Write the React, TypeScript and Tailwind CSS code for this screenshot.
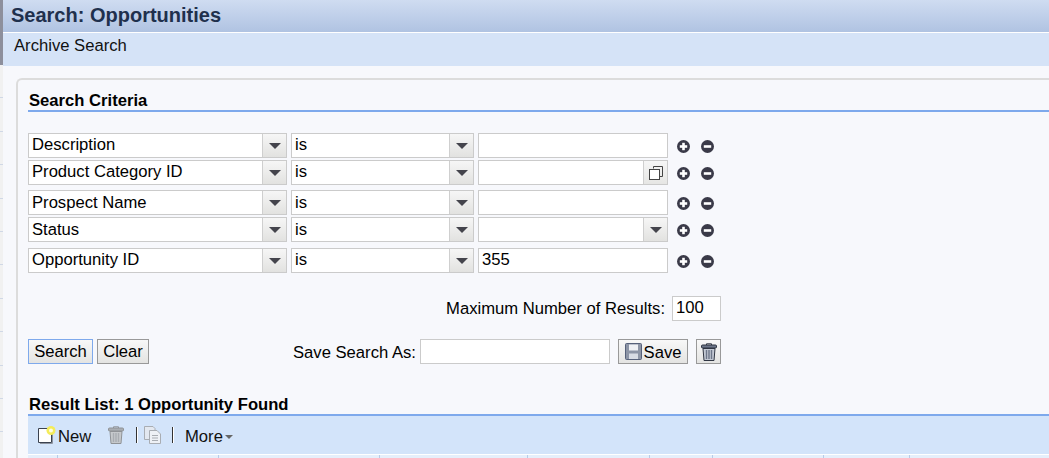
import React from 'react';

function Arrow() {
  return (
    <div className="w-6 h-full shrink-0 border-l border-[#cfcfcf] bg-gradient-to-b from-[#f6f6f6] to-[#e2e2e0] flex items-center justify-center">
      <div className="w-0 h-0 border-x-[6px] border-x-transparent border-t-[6px] border-t-[#44444c]" />
    </div>
  );
}

function Select({ value, className, low }: { value: string; className: string; low?: boolean }) {
  return (
    <div className={`h-[25px] border border-[#cbcbcb] bg-white flex items-center shrink-0 ${className}`}>
      <span className={`flex-1 pl-[3px] text-black whitespace-nowrap overflow-hidden ${low ? 'pb-0' : 'pb-[2px]'}`}>{value}</span>
      <Arrow />
    </div>
  );
}

function RoundBtn({ minus }: { minus?: boolean }) {
  return (
    <svg width="13" height="13" viewBox="0 0 13 13">
      <circle cx="6.5" cy="6.5" r="6.5" fill="#3a3a48" />
      <rect x="2.8" y="5.2" width="7.4" height="2.6" fill="#fff" />
      {!minus && <rect x="5.2" y="2.8" width="2.6" height="7.4" fill="#fff" />}
    </svg>
  );
}

function CriteriaRow({ label, last, mt, low }: { label: string; last: React.ReactNode; mt: string; low?: boolean }) {
  return (
    <div className={`flex items-center ${mt}`}>
      <Select value={label} low={low} className="w-[259px]" />
      <Select value="is" low={low} className="w-[183px] ml-[4px]" />
      <div className="ml-[4px] w-[190px] shrink-0">{last}</div>
      <div className="ml-[9px] flex gap-[11px] mt-[1px]">
        <RoundBtn />
        <RoundBtn minus />
      </div>
    </div>
  );
}

function TextBox({ value, className, children }: { value?: string; className: string; children?: React.ReactNode }) {
  return (
    <div className={`h-[25px] border border-[#cbcbcb] bg-white flex items-center ${className}`}>
      <span className="flex-1 pl-[3px] pb-[2px] text-black">{value}</span>
      {children}
    </div>
  );
}

function CopyIcon() {
  return (
    <svg width="14" height="14" viewBox="0 0 14 14" fill="none" stroke="#444">
      <path d="M4.5 2.5V0.5H13.5V10.5H10.5" />
      <rect x="0.5" y="3.5" width="10" height="10" fill="#fff" />
    </svg>
  );
}

function CopyDocsIcon() {
  return (
    <svg width="17" height="18" viewBox="0 0 17 18" fill="none" stroke="#a9adb3">
      <path d="M0.5 0.5H9L11 2.5V13.5H0.5Z" fill="#e3e8f0" />
      <path d="M5.5 4.5H13L16.5 8V17.5H5.5Z" fill="#eef1f6" />
      <path d="M8 9.5H14M8 12H14M8 14.5H14" />
    </svg>
  );
}

function SaveIcon() {
  return (
    <svg width="17" height="17" viewBox="0 0 17 17">
      <rect x="0.5" y="0.5" width="16" height="16" rx="1" fill="#8d95a6" stroke="#56617a" />
      <rect x="4" y="1.5" width="9" height="6" fill="#eef0f4" />
      <rect x="4" y="10.5" width="9" height="5.5" fill="#d8dce4" />
    </svg>
  );
}

function TrashIcon({ faded }: { faded?: boolean }) {
  const body = faded ? '#a9adb2' : '#6d7689';
  const line = faded ? '#8f9296' : '#2f3542';
  return (
    <svg width="16" height="18" viewBox="0 0 16 18">
      <path d="M5.5 2 V0.8 H10.5 V2" fill="none" stroke={line} />
      <rect x="0.5" y="2" width="15" height="3" rx="1" fill={body} stroke={line} />
      <path d="M2 5.5 H14 L13 17.5 H3 Z" fill={faded ? '#c6c9cc' : '#c3c9d4'} stroke={line} />
      <path d="M5.5 7 V16 M8 7 V16 M10.5 7 V16" stroke={body} strokeWidth="1.4" />
    </svg>
  );
}

function NewIcon() {
  return (
    <svg width="19" height="18" viewBox="0 0 19 18">
      <path d="M0.5 2.5 H13.5 V16.5 H0.5 Z" fill="#fff" stroke="#3b4250" />
      <path d="M14.5 6 V17.5 H2" fill="none" stroke="#8d94a0" />
      <circle cx="13" cy="4.5" r="4.5" fill="#f4ec5a" />
      <circle cx="13" cy="4.5" r="2" fill="#fffde0" />
    </svg>
  );
}

function Btn({ children, className }: { children: React.ReactNode; className: string }) {
  return (
    <div className={`h-[25px] shrink-0 border bg-gradient-to-b from-[#f8f8f8] to-[#e4e4e2] flex items-center justify-center text-black ${className}`}>
      {children}
    </div>
  );
}

function Pipe({ className }: { className: string }) {
  return <div className={`w-[2px] h-[16px] border-l border-l-[#333] border-r border-r-white ${className}`} />;
}

export default function App() {
  return (
    <div className="w-[1049px] h-[458px] overflow-hidden flex bg-white text-[16.64px] leading-[19px] font-['Liberation_Sans',Arial,sans-serif]">
      <div className="w-[3px] shrink-0 bg-[#f1f1f1] flex flex-col">
        <div className="h-[65px] shrink-0 bg-[#8d8f9c]" />
        {Array.from({ length: 12 }).map((_, i) => (
          <div key={i} className="h-[33.4px] shrink-0 border-b border-[#d0d8e6]" />
        ))}
      </div>
      <div className="flex-1 min-w-0 flex flex-col bg-[#f7f8fc]">
        <div className="h-[33px] shrink-0 pl-[8px] pt-[4px] border-b border-white bg-gradient-to-b from-[#cfdcf1] to-[#b0c3e2] text-[#1f304d] font-bold text-[20px] leading-[23px] whitespace-nowrap">
          Search: Opportunities
        </div>
        <div className="h-[33px] shrink-0 pl-[11px] pt-[3px] bg-[#d5e3f7] text-[#111]">Archive Search</div>
        <div className="ml-[13px] mt-[12px] flex-1 min-h-0 border-l-2 border-t-2 border-[#dcdcdc] rounded-tl-[6px] pl-[10px] pt-[11px]">
          <div className="h-[21px] border-b-2 border-[#7ea9ec] font-bold text-black whitespace-nowrap pl-[1px]">Search Criteria</div>
          <div className="pt-[21px]">
            <CriteriaRow label="Description" mt="" last={<TextBox className="w-full" />} />
            <CriteriaRow
              label="Product Category ID"
              mt="mt-[2px]"
              last={
                <TextBox className="w-full">
                  <div className="w-6 h-full border-l border-[#cfcfcf] bg-gradient-to-b from-[#f6f6f6] to-[#e6e6e4] flex items-center justify-center">
                    <CopyIcon />
                  </div>
                </TextBox>
              }
            />
            <CriteriaRow label="Prospect Name" mt="mt-[5px]" low last={<TextBox className="w-full" />} />
            <CriteriaRow
              label="Status"
              mt="mt-[2px]"
              low
              last={
                <TextBox className="w-full">
                  <Arrow />
                </TextBox>
              }
            />
            <CriteriaRow label="Opportunity ID" mt="mt-[6px]" last={<TextBox className="w-full" value="355" />} />
          </div>
          <div className="mt-[23px] w-[693px] flex items-center justify-end h-[25px]">
            <span className="text-black mr-[7px] whitespace-nowrap">Maximum Number of Results:</span>
            <TextBox className="w-[49px]" value="100" />
          </div>
          <div className="mt-[18px] w-[693px] flex items-center h-[25px]">
            <Btn className="w-[65px] border-[#7ea9ec] from-[#f7f9fd]">Search</Btn>
            <Btn className="w-[52px] ml-[4px] border-[#999]">Clear</Btn>
            <span className="ml-[144px] w-[123px] pt-[2px] shrink-0 text-black whitespace-nowrap">Save Search As:</span>
            <TextBox className="w-[190px] ml-[4px] shrink-0" />
            <Btn className="w-[70px] ml-[8px] border-[#999]">
              <SaveIcon />
              <span className="ml-[2px] pt-[2px]">Save</span>
            </Btn>
            <Btn className="w-[25px] ml-[8px] border-[#999]">
              <TrashIcon />
            </Btn>
          </div>
          <div className="mt-[27px] h-[25px] font-bold text-black whitespace-nowrap border-b-2 border-[#7ea9ec] leading-[22px] pt-[3px] pl-[1px]">
            Result List: 1 Opportunity Found
          </div>
          <div className="h-[39px] bg-[#d3e4fa] flex items-center pl-[10px] text-[#111] border-b border-white">
            <NewIcon />
            <span className="ml-[1px] w-[33px] pt-[2px]">New</span>
            <div className="ml-[17px]"><TrashIcon faded /></div>
            <Pipe className="ml-[12px]" />
            <div className="ml-[6px]"><CopyDocsIcon /></div>
            <Pipe className="ml-[11px]" />
            <span className="ml-[11px] pt-[2px]">More</span>
            <div className="ml-[2px] mt-[3px] w-0 h-0 border-x-[4px] border-x-transparent border-t-[4px] border-t-[#666]" />
          </div>
          <div className="h-[20px] bg-[#e6effb] flex">
            {[30, 161, 161, 148, 122, 63, 111, 86].map((w, i) => (
              <div key={i} style={{ width: w }} className="border-r border-[#b8cce8] shrink-0" />
            ))}
          </div>
        </div>
      </div>
    </div>
  );
}
